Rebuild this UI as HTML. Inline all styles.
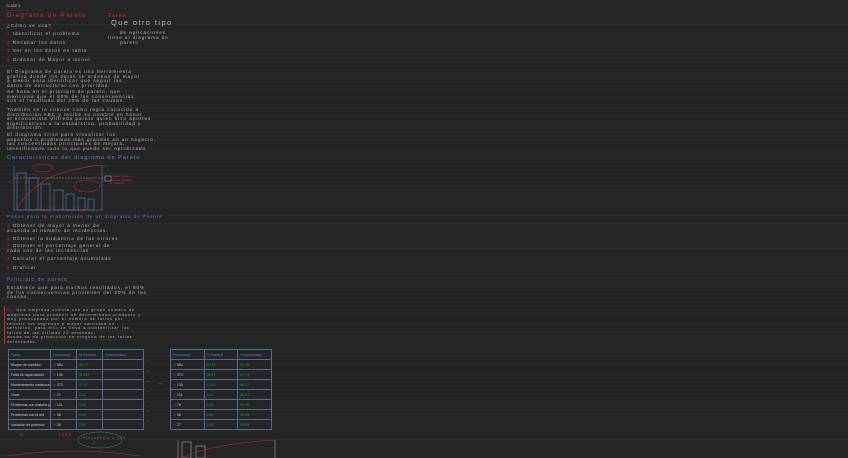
<!DOCTYPE html><html><head><meta charset="utf-8"><style>
body{margin:0;width:848px;height:458px;overflow:hidden;background:#242424;
background-image:repeating-linear-gradient(to bottom,transparent 0,transparent 7.4px,#2b2b2e 7.4px,#2b2b2e 8.3px);
font-family:"Liberation Sans",sans-serif;color:#bdbdbd;position:relative}
.t{position:absolute;font-size:4.5px;letter-spacing:1px;white-space:nowrap;line-height:4.6px}
.r{color:#c8283a}.b{color:#5585bb}.g{color:#2f9548}
.h{font-size:6.5px;letter-spacing:1.2px}
table{position:absolute;border-collapse:collapse;font-size:3.5px;color:#ccc;table-layout:fixed}
td{border:0.7px solid #4f6d96;height:9px;padding:0 2px;white-space:nowrap;overflow:hidden;line-height:4px}
</style></head><body>
<div class="t" style="left:6px;top:4px;font-size:3.5px;letter-spacing:0">CLASE 5</div>
<div class="t" style="left:6px;top:8px;font-size:3px;color:#777">—————— ———</div>
<div class="t r h" style="left:7px;top:14px">Diagrama de Pareto</div>
<div class="t" style="left:7px;top:24px">¿Cómo se usa?</div>
<div class="t" style="left:7px;top:32px"><span class="r">1</span> Identificar el problema</div>
<div class="t" style="left:7px;top:41px"><span class="r">2</span> Recabar los datos</div>
<div class="t" style="left:7px;top:49px"><span class="r">3</span> Ver en los datos en tabla</div>
<div class="t" style="left:7px;top:58px"><span class="r">4</span> Ordenar de Mayor a menor</div>
<div class="t" style="left:7px;top:70px">El Diagrama de pareto es una herramienta<br>grafica donde los datos se ordenan de mayor<br>a menor para identificar que seguir los<br>datos de estructurar con prioridad.</div>
<div class="t" style="left:7px;top:90px">Se basa en el principio de pareto, que<br>menciona que el 80% de los consecuencias<br>son el resultado del 20% de las causas.</div>
<div class="t" style="left:7px;top:108px">También se le conoce como regla conocida a<br>distribución ABC y recibe su nombre en honor<br>al economista Vilfredo pareto quien hizo aportes<br>significativos a la estadística, probabilidad y<br>distribución.</div>
<div class="t" style="left:7px;top:133px">El diagrama sirve para visualizar los<br>aspectos o problemas más grandes en un negocio,<br>las concentradas principales de mejora,<br>identificando todo lo que puede ser optimizado</div>
<div class="t r" style="left:108px;top:14px;font-size:5.5px">Tarea</div>
<div class="t" style="left:111px;top:21px;font-size:7.5px;letter-spacing:1.4px">Que otro tipo</div>
<div class="t" style="left:120px;top:31px">de aplicaciones</div>
<div class="t" style="left:108px;top:36px">tiene el diagrama de</div>
<div class="t" style="left:120px;top:41px">pareto</div>
<div class="t b" style="left:7px;top:156px;font-size:5.5px">Características del diagrama de Pareto</div>
<svg style="position:absolute;left:5px;top:160px" width="130" height="55">
<g stroke="#5585bb" fill="none" stroke-width="0.6">
<line x1="9" y1="6" x2="9" y2="50"/><line x1="9" y1="50" x2="98" y2="50"/><line x1="97" y1="6" x2="97" y2="50"/>
<rect x="12" y="13" width="9" height="37"/><rect x="24" y="18" width="9" height="32"/><rect x="36" y="24" width="9" height="26"/><rect x="49" y="30" width="9" height="20"/><rect x="61" y="34" width="8" height="16"/><rect x="73" y="38" width="7" height="12"/><rect x="83" y="39" width="6" height="11"/>
<line x1="9" y1="18" x2="100" y2="18" stroke-dasharray="2 1" stroke="#999"/></g>
<path d="M12 48 Q30 20 60 12 T100 6" stroke="#c8283a" fill="none" stroke-width="0.6"/>
<ellipse cx="38" cy="8" rx="10" ry="4" stroke="#c8283a" fill="none" stroke-width="0.5"/>
<ellipse cx="82" cy="26" rx="13" ry="6" stroke="#c8283a" fill="none" stroke-width="0.5"/>
<rect x="100" y="16" width="6" height="5" stroke="#bbb" fill="none" stroke-width="0.5"/>
</svg>
<div class="t r" style="left:110px;top:175px;font-size:3px;letter-spacing:0;line-height:3.5px">Causas vitales<br>Causas triviales<br>% Valores</div>
<div class="t r" style="left:34px;top:208px;font-size:3.5px">Causas / Frecuencia</div>
<div class="t b" style="left:7px;top:215px">Pasos para la elaboración de un diagrama de Pareto</div>
<div class="t" style="left:7px;top:224px"><span class="r">1</span> Obtener de mayor a menor de<br>acuerdo al número de incidencias.</div>
<div class="t" style="left:7px;top:237px"><span class="r">2</span> Obtener la sumatoria de las errores</div>
<div class="t" style="left:7px;top:244px"><span class="r">3</span> Obtener el porcentaje general de<br>cada uno de las incidencias</div>
<div class="t" style="left:7px;top:257px"><span class="r">4</span> Calcular el porcentaje acumulado</div>
<div class="t" style="left:7px;top:266px"><span class="r">5</span> Graficar</div>
<div class="t b" style="left:7px;top:278px;font-size:5px">Principio de pareto</div>
<div class="t" style="left:7px;top:286px">Establece que para muchos resultados, el 80%<br>de los consecuencias provienen del 20% de las<br>causas.</div>
<div class="t" style="left:7px;top:308px;font-size:3.8px;line-height:4.5px"><span class="r">Ej.</span> Una empresa cuenta con un grupo número de<br>máquinas para producir un determinado producto y<br>muy preocupado por el número de fallos por<br>reducir los ingresos y mayor cantidad en<br>servicios, para ello se lleva a contabilizar los<br>fallos de las últimas 20 semanas,<br>donde se ha producido en ninguna de las fallas<br>detectadas.</div>
<div style="position:absolute;left:4px;top:306px;width:1px;height:38px;background:#c8283a"></div>
<table style="left:8px;top:349px;width:136px">
<col style="width:42px"><col style="width:26px"><col style="width:26px"><col>
<tr style="color:#5585bb"><td>Fallos</td><td>Frecuencia</td><td>% General</td><td>% Acumulado</td></tr>
<tr><td>Bloque de contador</td><td><span class="r">⊘</span> 564</td><td class="g">40.73</td><td></td></tr>
<tr><td>Falta de capacitación</td><td><span class="r">⊘</span> 135</td><td class="g">11.157</td><td></td></tr>
<tr><td>Mantenimiento inadecuado</td><td><span class="r">⊘</span> 373</td><td class="g">27.47</td><td></td></tr>
<tr><td>Otros</td><td><span class="r">⊘</span> 27</td><td class="g">2.02</td><td></td></tr>
<tr><td>Problemas con materia prima</td><td><span class="r">⊘</span> 131</td><td class="g">9.43</td><td></td></tr>
<tr><td>Problemas con la red</td><td><span class="r">⊘</span> 36</td><td class="g">5.44</td><td></td></tr>
<tr><td>Variación de potencia</td><td><span class="r">⊘</span> 36</td><td class="g">2.60</td><td></td></tr>
</table>
<table style="left:170px;top:349px;width:102px">
<tr style="color:#5585bb"><td>Frecuencia</td><td>% General</td><td>% Acumulado</td></tr>
<tr><td><span class="r">⊘</span> 564</td><td class="g">40.74</td><td class="g">40.78</td></tr>
<tr><td><span class="r">⊘</span> 373</td><td class="g">26.47</td><td class="g">67.74</td></tr>
<tr><td><span class="r">⊘</span> 135</td><td class="g">12.43</td><td class="g">80.42</td></tr>
<tr><td><span class="r">⊘</span> 131</td><td class="g">9.47</td><td class="g">80.87</td></tr>
<tr><td><span class="r">⊘</span> 76</td><td class="g">5.49</td><td class="g">90.36</td></tr>
<tr><td><span class="r">⊘</span> 36</td><td class="g">2.60</td><td class="g">92.96</td></tr>
<tr><td><span class="r">⊘</span> 27</td><td class="g">2.02</td><td class="g">95.98</td></tr>
</table>
<div class="t r" style="left:145px;top:356px;line-height:10px;font-size:6px;letter-spacing:0">→<br>→<br>→<br>→<br>→<br>→<br>→</div>
<div class="t b" style="left:157px;top:382px;font-size:7px">→</div>
<div class="t r" style="left:20px;top:433px">Σ</div>
<div class="t r" style="left:58px;top:433px">1383</div>
<svg style="position:absolute;left:75px;top:430px" width="50" height="20"><ellipse cx="25" cy="10" rx="22" ry="8" stroke="#2f9548" fill="none" stroke-width="0.5"/></svg>
<div class="t g" style="left:83px;top:436px;font-size:3.5px">Frecuencia × 100<br>&nbsp;&nbsp;&nbsp;&nbsp;&nbsp;Σ</div>
<svg style="position:absolute;left:170px;top:436px" width="110" height="22"><g stroke="#bbb" fill="none" stroke-width="0.5"><line x1="8" y1="4" x2="8" y2="22"/><rect x="12" y="6" width="9" height="16"/><rect x="26" y="10" width="9" height="12"/><line x1="105" y1="4" x2="105" y2="22"/></g><path d="M12 22 Q40 8 105 4" stroke="#c8283a" fill="none" stroke-width="0.5"/></svg>
<svg style="position:absolute;left:5px;top:448px" width="140" height="10"><path d="M2 8 Q70 -2 135 8" stroke="#c8283a" fill="none" stroke-width="0.5"/></svg>
</body></html>
